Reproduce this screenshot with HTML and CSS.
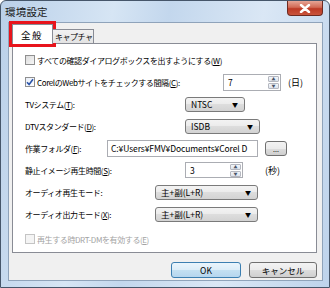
FILE: index.html
```html
<!DOCTYPE html>
<html lang="ja">
<head>
    <meta charset="UTF-8">
    <title>環境設定</title>
    <link rel="stylesheet" href="styles.css">
</head>
<body>
    <div class="window">
        <div class="titlebar">
            <span class="title">環境設定</span>
            <div class="close-btn">
                <svg width="12" height="9" viewBox="0 0 12 9"><path d="M2 1 L10 8 M10 1 L2 8" stroke="#fff" stroke-width="2.4" stroke-linecap="round"/></svg>
            </div>
        </div>

        <div class="content">
            <div class="tabs">
                <div class="tab active">全般</div>
                <div class="tab">キャプチャ</div>
            </div>

            <div class="panel">
                <div class="row">
                    <span class="check"></span>
                    <span class="check-label">すべての確認ダイアログボックスを出すようにする(<u>W</u>)</span>
                </div>
                <div class="row">
                    <span class="check checked">
                        <svg width="8" height="8" viewBox="0 0 8 8"><path d="M1 4.2 L3.1 6.5 L7 1.2" fill="none" stroke="#2a54a8" stroke-width="1.6"/></svg>
                    </span>
                    <span class="check-label label-corel">CorelのWebサイトをチェックする間隔(<u>C</u>):</span>
                    <div class="spin spin-days">
                        <span class="spin-value">7</span>
                        <div class="spin-arrows"><span class="up">▲</span><span class="down">▼</span></div>
                    </div>
                    <span class="unit unit-days">(日)</span>
                </div>
                <div class="row">
                    <span class="label w-long">TVシステム(<u>T</u>):</span>
                    <div class="combo combo-tv"><span>NTSC</span><span class="arrow">▼</span></div>
                </div>
                <div class="row">
                    <span class="label w-long">DTVスタンダード(<u>D</u>):</span>
                    <div class="combo combo-dtv"><span>ISDB</span><span class="arrow">▼</span></div>
                </div>
                <div class="row">
                    <span class="label w-folder">作業フォルダ(<u>F</u>):</span>
                    <div class="textbox">C:¥Users¥FMV¥Documents¥Corel D</div>
                    <div class="browse">...</div>
                </div>
                <div class="row">
                    <span class="label w-long">静止イメージ再生時間(<u>S</u>):</span>
                    <div class="spin spin-secs">
                        <span class="spin-value">3</span>
                        <div class="spin-arrows"><span class="up">▲</span><span class="down">▼</span></div>
                    </div>
                    <span class="unit unit-secs">(秒)</span>
                </div>
                <div class="row">
                    <span class="label w-audio">オーディオ再生モード:</span>
                    <div class="combo combo-audio"><span>主+副(L+R)</span><span class="arrow">▼</span></div>
                </div>
                <div class="row">
                    <span class="label w-audio">オーディオ出力モード(<u>X</u>):</span>
                    <div class="combo combo-audio"><span>主+副(L+R)</span><span class="arrow">▼</span></div>
                </div>
                <div class="row row-last">
                    <span class="check disabled"></span>
                    <span class="check-label disabled-text">再生する時DRT-DMを有効する(<u>E</u>)</span>
                </div>
            </div>

            <div class="buttons">
                <div class="btn default">OK</div>
                <div class="btn">キャンセル</div>
            </div>
        </div>
    </div>
</body>
</html>
```

FILE: styles.css
```css
body {
    margin: 0;
    font-family: "Noto Sans CJK JP", "Liberation Sans", sans-serif;
    font-size: 8px;
    color: #000;
}
.window {
    width: 330px;
    height: 288px;
    box-sizing: border-box;
    display: flex;
    flex-direction: column;
    padding: 0 6px 6px 7px;
    border: 1px solid #46566a;
    border-radius: 6px 6px 0 0;
    background: linear-gradient(100deg, #bad0e9 0%, #d6e5f4 30%, #c3d7ed 45%, #dae7f5 70%, #bed3eb 100%);
}
.titlebar {
    height: 21px;
    display: flex;
    align-items: flex-start;
}
.title {
    margin-top: 3px;
    margin-left: -3px;
    font-size: 10.5px;
    letter-spacing: 0.2px;
    color: #1a1a1a;
}
.close-btn {
    margin-left: auto;
    width: 36px;
    height: 15px;
    box-sizing: border-box;
    border: 1px solid #6e2a20;
    border-top: none;
    border-radius: 0 0 4px 4px;
    background: linear-gradient(#e6a596, #d26a55 45%, #bd3a25 55%, #c9543c);
    display: flex;
    align-items: center;
    justify-content: center;
}
.content {
    flex: 1;
    background: #f0f0f0;
    border: 1px solid #8fa3ba;
    padding: 2px 5px 0 3px;
    display: flex;
    flex-direction: column;
}
.tabs {
    height: 18px;
    display: flex;
    align-items: flex-end;
    position: relative;
    z-index: 1;
}
.tab {
    height: 14px;
    box-sizing: border-box;
    padding: 0 1px 0 2px;
    border: 1px solid #898c95;
    border-bottom: none;
    border-left: none;
    background: linear-gradient(#f2f2f2, #e3e3e3);
    display: flex;
    align-items: center;
    font-size: 8px;
    letter-spacing: -0.5px;
}
.tab.active {
    height: 20px;
    margin-bottom: -1px;
    width: 41px;
    padding-left: 8px;
    border-left: 1px solid #898c95;
    background: #fff;
    font-size: 9.5px;
    letter-spacing: 1.5px;
    outline: 3px solid #e8141c;
    outline-offset: 0;
}
.panel {
    height: 210px;
    box-sizing: border-box;
    background: #fff;
    border: 1px solid #898c95;
    padding: 5px 0 0 12px;
}
.row {
    height: 22px;
    display: flex;
    align-items: center;
}
.row-last {
    margin-top: 3px;
}
.check {
    width: 10px;
    height: 10px;
    box-sizing: border-box;
    border: 1px solid #8f8f8f;
    background: linear-gradient(135deg, #dcdcdc, #f6f6f6);
    display: flex;
    align-items: center;
    justify-content: center;
}
.check.checked {
    background: linear-gradient(135deg, #e8eef8, #fff);
}
.check.disabled {
    border-color: #c4c4c4;
    background: #f4f4f4;
}
.check-label {
    margin-left: 2px;
    letter-spacing: -0.4px;
}
.label-corel {
    width: 186px;
}
.disabled-text {
    color: #a3a3a3;
}
.label {
    letter-spacing: -0.4px;
}
.w-long {
    width: 160px;
}
.w-folder {
    width: 82px;
}
.w-audio {
    width: 130px;
}
.spin {
    height: 17px;
    box-sizing: border-box;
    border: 1px solid #abadb3;
    background: #fff;
    display: flex;
    justify-content: space-between;
}
.spin-days {
    width: 58px;
}
.spin-secs {
    width: 58px;
    height: 16px;
}
.spin-value {
    padding: 1px 0 0 4px;
    font-size: 8.5px;
}
.spin-arrows {
    width: 11px;
    display: flex;
    flex-direction: column;
    gap: 1px;
    padding: 1px;
}
.spin-arrows span {
    flex: 1;
    border: 1px solid #b5b8c0;
    border-radius: 1px;
    background: linear-gradient(#f3f6fa, #dde3ec);
    font-size: 4px;
    color: #4a5568;
    display: flex;
    align-items: center;
    justify-content: center;
    line-height: 1;
}
.unit {
    font-size: 9px;
}
.unit-days {
    margin-left: 7px;
}
.unit-secs {
    margin-left: 22px;
}
.combo {
    height: 15px;
    box-sizing: border-box;
    border: 1px solid #7a7a7a;
    border-radius: 3px;
    background: linear-gradient(#f3f3f3, #ebebeb 50%, #dddddd 50%, #d3d3d3);
    display: flex;
    align-items: center;
    justify-content: space-between;
    padding: 0 6px 0 5px;
    font-size: 8.5px;
}
.combo .arrow {
    font-size: 6px;
}
.combo-tv {
    width: 60px;
}
.combo-dtv {
    width: 75px;
}
.combo-audio {
    width: 103px;
}
.textbox {
    width: 151px;
    height: 17px;
    box-sizing: border-box;
    border: 1px solid #abadb3;
    background: #fff;
    padding: 1px 0 0 3px;
    white-space: nowrap;
    overflow: hidden;
    font-size: 8.5px;
    letter-spacing: -0.1px;
}
.browse {
    margin-left: 7px;
    width: 22px;
    height: 15px;
    box-sizing: border-box;
    border: 1px solid #707070;
    border-radius: 3px;
    background: linear-gradient(#f3f3f3, #ebebeb 50%, #dddddd 50%, #cfcfcf);
    font-size: 7px;
    display: flex;
    justify-content: center;
    align-items: flex-end;
    line-height: 1;
    padding-bottom: 2px;
}
.buttons {
    display: flex;
    justify-content: flex-end;
    gap: 8px;
    margin-top: 9px;
}
.btn {
    width: 68px;
    height: 16px;
    box-sizing: border-box;
    border: 1px solid #707070;
    border-radius: 3px;
    background: linear-gradient(#f3f3f3, #ebebeb 50%, #dddddd 50%, #cfcfcf);
    display: flex;
    align-items: center;
    justify-content: center;
    font-size: 8.5px;
}
.btn.default {
    width: 70px;
    border-color: #3c7fb1;
    background: linear-gradient(#eaf5fc, #dcedf8 50%, #c4e0f2 50%, #b5d6ee);
}
```
